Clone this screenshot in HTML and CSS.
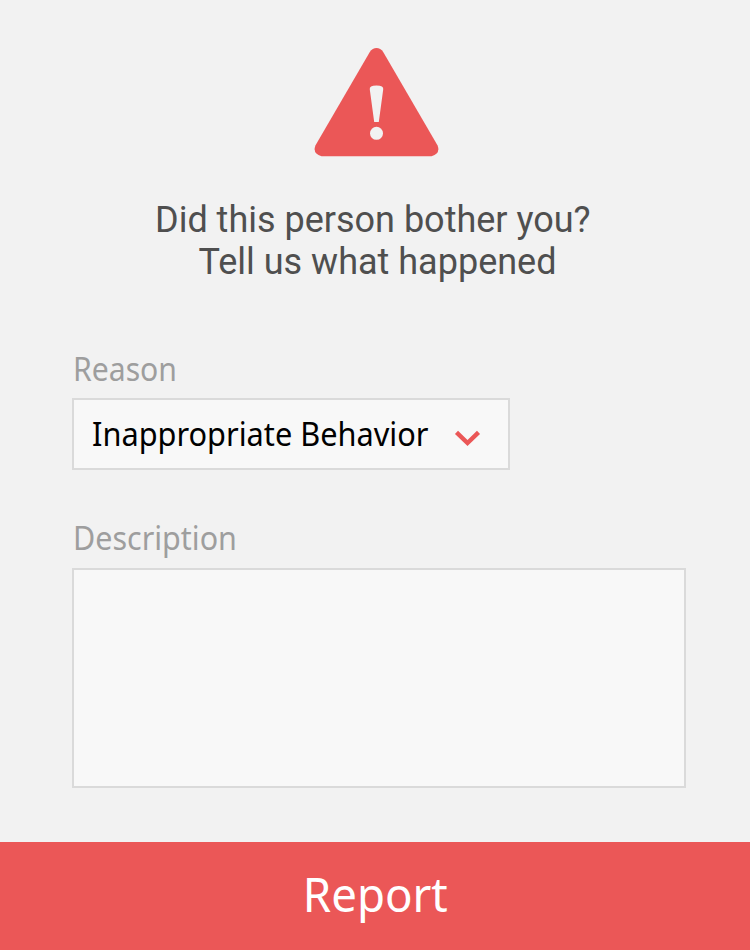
FILE: index.html
```html
<!DOCTYPE html>
<html lang="en">
<head>
<meta charset="utf-8">
<title>Report</title>
<link rel="stylesheet" href="styles.css">
</head>
<body>
<form class="report">
  <svg class="warning" viewBox="0 0 126 110" aria-hidden="true">
    <path d="M56.800 5C60 -.2 67 -.2 70.200 5L124.600 98.500Q127.600 107 118.500 109.200H8.500Q-.6 107 2.400 98.500Z" fill="#eb5757"/>
    <path d="M56.800 42.500Q56 38.600 63.500 38.600T70.200 42.500L65.800 75H61.200Z" fill="#f2f2f2"/>
    <circle cx="63.500" cy="86.300" r="6.500" fill="#f2f2f2"/>
  </svg>
  <h1 class="title"><span class="line first">Did this person bother you?</span><span class="line second">Tell us what happened</span></h1>
  <div class="label reason">Reason</div>
  <div class="select"><span class="value">Inappropriate Behavior</span>
    <svg class="chevron" viewBox="0 0 28 18" aria-hidden="true"><path d="M3.500 3.300L14.500 14L25.500 3.300" fill="none" stroke="#eb5757" stroke-width="4.400"/></svg>
  </div>
  <div class="label description">Description</div>
  <div class="textarea"></div>
  <button class="submit" type="button"><span class="submit-text">Report</span></button>
</form>
</body>
</html>
```
FILE: styles.css
```css
* { box-sizing: border-box; }
body { margin: 0; background: #fff; }
.report { width: 750px; height: 950px; background: #f2f2f2; display: flex; flex-direction: column; font-family: "Noto Sans", sans-serif; }
.warning { width: 126px; height: 110px; margin: 47px 0 0 313px; flex: none; }
.title { margin: 42px 0 0; font: 400 36px/42px Roboto, sans-serif; color: #4f4f4f; height: 84px; }
.line { display: block; white-space: nowrap; }
.first { margin-left: 155px; }
.second { margin-left: 198.5px; }
.label { font-size: 32px; line-height: 40px; height: 40px; margin-left: 73px; color: #9e9e9e; white-space: nowrap; transform: scaleX(.942); transform-origin: left; }
.reason { margin-top: 66px; }
.select { width: 438px; height: 72px; margin: 9px 0 0 72px; padding: 0 0 0 18px; border: 2px solid #dadada; background: #f8f8f8; color: #000; font-size: 32px; display: flex; align-items: center; white-space: nowrap; }
.value { width: 350px; flex: none; margin-top: -1px; transform: scaleX(.96); transform-origin: left; }
.chevron { width: 28px; height: 18px; margin: 7px 0 0 11px; flex: none; }
.description { margin-top: 48px; transform: scaleX(.952); }
.textarea { width: 614px; height: 220px; margin: 10px 0 0 72px; border: 2px solid #dadada; background: #f8f8f8; }
.submit { width: 750px; height: 108px; margin: auto 0 0; border: 0; padding: 0 0 4px; background: #eb5757; color: #fff; font: 48px/64px "Noto Sans", sans-serif; }
.submit-text { display: inline-block; transform: scaleX(.95); }
```
